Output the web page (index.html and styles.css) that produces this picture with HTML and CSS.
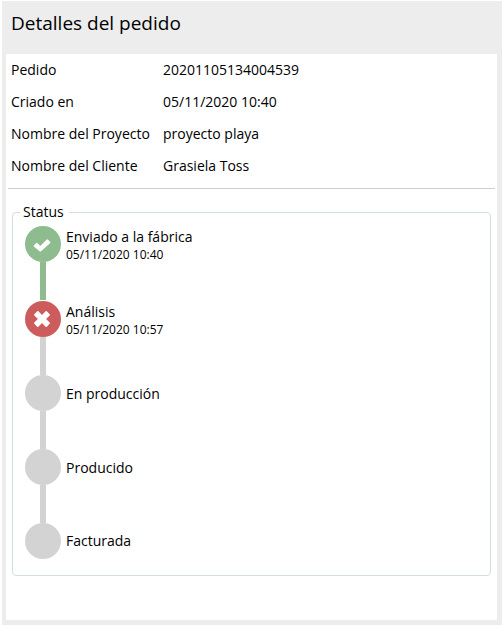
FILE: index.html
```html
<!DOCTYPE html>
<html lang="es">
<head>
    <meta charset="UTF-8">
    <meta name="viewport" content="width=device-width, initial-scale=1.0">
    <title>Detalles del pedido</title>
    <link rel="stylesheet" href="styles.css">
</head>
<body>
    <main class="modal">
        <h1 class="modal-title">Detalles del pedido</h1>
        <div class="modal-body">
            <table class="info">
                <tr>
                    <th scope="row">Pedido</th>
                    <td>20201105134004539</td>
                </tr>
                <tr>
                    <th scope="row">Criado en</th>
                    <td>05/11/2020 10:40</td>
                </tr>
                <tr>
                    <th scope="row">Nombre del Proyecto</th>
                    <td>proyecto playa</td>
                </tr>
                <tr>
                    <th scope="row">Nombre del Cliente</th>
                    <td>Grasiela Toss</td>
                </tr>
            </table>
            <hr class="divider">
            <fieldset class="status">
                <legend>Status</legend>
                <ol class="steps">
                    <li class="step done">
                        <div class="marker">
                            <span class="circle">
                                <svg width="20" height="20" viewBox="0 0 20 20" aria-hidden="true">
                                    <path d="M0.8 11.4 L3.2 8.9 Q3.7 8.5 4.2 8.9 L7.3 11.9 L13.8 5.4 Q14.3 5 14.8 5.4 L17.3 7.9 Q17.7 8.4 17.3 8.9 L7.8 17.4 Q7.3 17.8 6.8 17.4 L0.8 12.4 Q0.4 11.9 0.8 11.4 Z" fill="#fff"/>
                                </svg>
                            </span>
                        </div>
                        <div class="text">
                            <span>Enviado a la fábrica</span>
                            <small>05/11/2020 10:40</small>
                        </div>
                    </li>
                    <li class="step error">
                        <div class="marker">
                            <span class="circle">
                                <svg width="20" height="20" viewBox="0 0 20 20" aria-hidden="true">
                                    <path d="M1.3 5.2 L4.2 2.3 Q4.8 1.8 5.4 2.3 L9 5.9 L12.6 2.3 Q13.2 1.8 13.8 2.3 L16.7 5.2 Q17.2 5.8 16.7 6.4 L13.1 10 L16.7 13.6 Q17.2 14.2 16.7 14.8 L13.8 17.7 Q13.2 18.2 12.6 17.7 L9 14.1 L5.4 17.7 Q4.8 18.2 4.2 17.7 L1.3 14.8 Q0.8 14.2 1.3 13.6 L4.9 10 L1.3 6.4 Q0.8 5.8 1.3 5.2 Z" fill="#fff"/>
                                </svg>
                            </span>
                        </div>
                        <div class="text">
                            <span>Análisis</span>
                            <small>05/11/2020 10:57</small>
                        </div>
                    </li>
                    <li class="step">
                        <div class="marker"><span class="circle"></span></div>
                        <div class="text"><span>En producción</span></div>
                    </li>
                    <li class="step">
                        <div class="marker"><span class="circle"></span></div>
                        <div class="text"><span>Producido</span></div>
                    </li>
                    <li class="step">
                        <div class="marker"><span class="circle"></span></div>
                        <div class="text"><span>Facturada</span></div>
                    </li>
                </ol>
            </fieldset>
        </div>
    </main>
</body>
</html>
```

FILE: styles.css
```css
* {
    box-sizing: border-box;
}

body {
    margin: 0;
    padding: 1px 1px 1px 2px;
    min-height: 100vh;
    display: flex;
    background-color: white;
    color: black;
    font-family: "Segoe UI", "Open Sans", "Noto Sans", sans-serif;
    font-size: 14px;
    line-height: 20px;
}

.modal {
    flex: 1;
    display: flex;
    flex-direction: column;
    padding: 0 5px 5px 4px;
    background-color: #ededed;
}

.modal-title {
    margin: 0;
    padding: 8px 5px 17px;
    font-size: 19px;
    font-weight: normal;
    line-height: 28px;
}

.modal-body {
    flex: 1;
    padding: 0 2px;
    background-color: white;
}

.info {
    border-collapse: collapse;
}

.info th,
.info td {
    padding: 6px 3px;
    font-weight: normal;
    text-align: left;
}

.info th {
    width: 152px;
    white-space: nowrap;
}

.divider {
    margin: 6px 0 13px;
    border: 0;
    border-top: 1px solid #cecece;
}

.status {
    margin: 0 4px;
    padding: 4px 7px 16px;
    border: 1px solid #d5dde5;
    border-radius: 4px;
}

.status legend {
    padding: 0 5px 0 3px;
}

.steps {
    margin: 0;
    padding: 0 0 0 5px;
    list-style: none;
}

.step {
    display: flex;
    gap: 5px;
}

.marker {
    display: flex;
    flex-direction: column;
    align-items: center;
}

.marker::after {
    content: "";
    width: 6px;
    height: 38px;
    background-color: lightgray;
}

.step:last-child .marker::after {
    display: none;
}

.step:last-child .text {
    height: 36px;
}

.circle {
    display: flex;
    align-items: center;
    justify-content: center;
    width: 36px;
    height: 36px;
    border-radius: 50%;
    background-color: lightgray;
}

.done {
    margin-bottom: 1px;
}

.done .circle,
.done .marker::after {
    background-color: darkseagreen;
}

.error .circle {
    background-color: indianred;
}

.text {
    display: flex;
    flex-direction: column;
    justify-content: center;
    height: 38px;
}

.text small {
    font-size: 12px;
    line-height: 16px;
}
```
